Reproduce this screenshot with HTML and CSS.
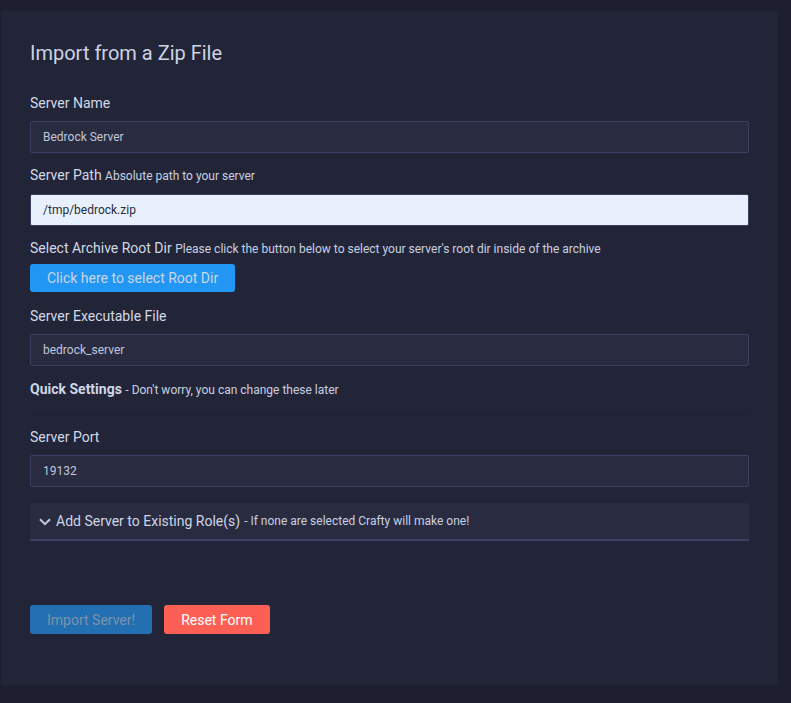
FILE: index.html
```html
<!DOCTYPE html>
<html>
<head>
<meta charset="utf-8">
<link rel="stylesheet" href="styles.css">
</head>
<body>
<div class="page">
  <div class="card">
    <h1 class="title">Import from a Zip File</h1>

    <div class="group">
      <label class="label">Server Name</label>
      <div class="input">Bedrock Server</div>
    </div>

    <div class="group">
      <label class="label">Server Path <small>Absolute path to your server</small></label>
      <div class="input input-light">/tmp/bedrock.zip</div>
    </div>

    <div class="group group-btn">
      <label class="label">Select Archive Root Dir <small>Please click the button below to select your server's root dir inside of the archive</small></label>
      <div class="btn-row"><button class="btn btn-info">Click here to select Root Dir</button></div>
    </div>

    <div class="group group-exec">
      <label class="label">Server Executable File</label>
      <div class="input">bedrock_server</div>
    </div>

    <p class="quick"><strong>Quick Settings</strong> <small>- Don't worry, you can change these later</small></p>
    <hr class="divider">

    <div class="group">
      <label class="label">Server Port</label>
      <div class="input">19132</div>
    </div>

    <div class="accordion">
      <svg class="chev" width="12" height="8" viewBox="0 0 12 8"><path d="M1 1.2 L6 6.2 L11 1.2" fill="none" stroke="#c3cbe0" stroke-width="2"/></svg>
      <span class="acc-title">Add Server to Existing Role(s)</span>
      <small>- If none are selected Crafty will make one!</small>
    </div>

    <div class="actions">
      <button class="btn btn-primary">Import Server!</button>
      <button class="btn btn-danger">Reset Form</button>
    </div>
  </div>
</div>
</body>
</html>
```

FILE: styles.css
```css
* { box-sizing: border-box; }
html, body { margin: 0; padding: 0; }
body {
  background: #1d1e2f;
  font-family: Roboto, "Liberation Sans", sans-serif;
  color: #d3d8e6;
  width: 791px;
  height: 703px;
  overflow: hidden;
}
.page {
  padding: 11px 13px 18px 1px;
}
.card {
  background: #222538;
  height: 674px;
  padding: 30px 29px 0 29px;
}
.title {
  margin: 0 0 28px 0;
  font-size: 20px;
  line-height: 24px;
  font-weight: 400;
  color: #cdd3e3;
}
.group { margin-bottom: 12px; }
.group-btn { margin-bottom: 14px; }
.group-exec { margin-bottom: 13px; }
.label {
  display: block;
  font-size: 14px;
  line-height: 21px;
  margin-bottom: 7px;
  color: #d3d8e6;
}
small { font-size: 12px; color: #c9d0e0; }
.input {
  height: 32px;
  border: 1px solid #3b3e5e;
  border-radius: 2px;
  background: #292b40;
  font-size: 12px;
  line-height: 30px;
  padding: 0 12px;
  color: #c0c7da;
}
.input-light {
  background: #e8f0fe;
  color: #2a2c3a;
  border-color: #3b3e5e;
}
.btn-row { display: flex; margin-top: -3px; }
.btn {
  font-family: Roboto, "Liberation Sans", sans-serif;
  font-size: 14px;
  height: 28px;
  border: none;
  border-radius: 3px;
  padding: 0 17px;
  cursor: pointer;
}
.btn-info { background: #2196f3; color: #c9d7e8; }
.btn-primary { background: #226fb1; color: #7d92ab; height: 29px; padding: 0 17px; }
.btn-danger { background: #fe5f55; color: #ffffff; height: 29px; padding: 0 17px; }
.quick {
  margin: 0;
  font-size: 14px;
  line-height: 21px;
}
.quick strong { color: #cfd6e6; font-weight: 700; }
.divider {
  border: 0;
  border-top: 1px solid #1f2133;
  margin: 13px 0 12px 0;
}
.accordion {
  margin-top: 16px;
  height: 38px;
  background: #292b40;
  border-bottom: 2px solid #3d3f66;
  border-radius: 3px 3px 0 0;
  display: flex;
  align-items: center;
  padding: 0 0 0 9px;
  font-size: 14px;
}
.chev { margin-right: 5px; margin-top: 1px; }
.acc-title { color: #cfd6e6; margin-right: 4px; font-size: 14px; }
.actions {
  margin-top: 64px;
  display: flex;
  gap: 12px;
}
```
